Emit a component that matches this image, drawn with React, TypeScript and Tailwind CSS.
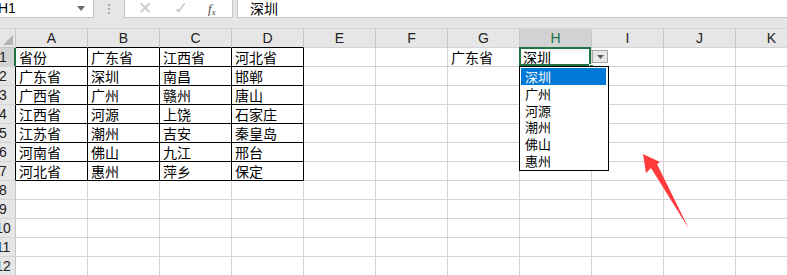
import React from 'react'

const cols = ['A', 'B', 'C', 'D', 'E', 'F', 'G', 'H', 'I', 'J', 'K']

const data: string[][] = [
  ['省份', '广东省', '江西省', '河北省', '', '', '广东省', '深圳'],
  ['广东省', '深圳', '南昌', '邯郸'],
  ['广西省', '广州', '赣州', '唐山'],
  ['江西省', '河源', '上饶', '石家庄'],
  ['江苏省', '潮州', '吉安', '秦皇岛'],
  ['河南省', '佛山', '九江', '邢台'],
  ['河北省', '惠州', '萍乡', '保定'],
]

const options = ['深圳', '广州', '河源', '潮州', '佛山', '惠州']

const cjk = "font-['Noto_Sans_CJK_SC','Noto_Sans',sans-serif]"

function Cell({ r, c }: { r: number; c: number }) {
  const text = data[r]?.[c] ?? ''
  const inTable = r < 7 && c < 4
  const selected = r === 0 && c === 7

  return (
    <div
      className={`relative h-[19px] border-r border-b pl-[3px] text-[14px] leading-[19px] text-black whitespace-nowrap ${cjk} ${
        inTable ? 'border-r-black border-b-black' : 'border-r-[#d4d4d4] border-b-[#d4d4d4]'
      }`}
    >
      {text}
      {selected && (
        <>
          <div className="absolute -left-px -top-px right-0 bottom-0 border-2 border-[#217346]" />
          <div className="absolute -right-[3px] -bottom-[3px] w-[5px] h-[5px] bg-[#217346] border border-white" />
          {/* validation dropdown button */}
          <div className="absolute left-[72px] top-[2px] w-[16px] h-[13px] bg-[#e8e8e8] border border-[#a6a6a6] flex items-center justify-center">
            <svg width="7" height="4" viewBox="0 0 7 4">
              <path d="M0 0h7L3.5 4z" fill="#5a5a5a" />
            </svg>
          </div>
          {/* validation list */}
          <div className="absolute z-10 -left-px top-[18px] w-[90px] bg-white border border-black pt-px pb-px pl-px pr-[2px]">
            {options.map((o, i) => (
              <div
                key={o}
                className={`h-[16.8px] overflow-visible pl-[4px] text-[13px] leading-[17px] ${i === 0 ? 'bg-[#0078d7] text-white' : 'text-black'}`}
              >
                {o}
              </div>
            ))}
          </div>
        </>
      )}
    </div>
  )
}

export default function App() {
  return (
    <div className="relative w-[787px] h-[275px] overflow-hidden bg-white font-['Liberation_Sans',sans-serif]">
      {/* formula bar */}
      <div className="h-[28px] bg-[#e6e6e6] flex items-start">
        <div className="w-[94px] h-[18px] bg-white border-r border-b border-[#c6c6c6] flex items-center justify-between pr-[8px]">
          <span className="-ml-[2px] text-[14px] text-black">H1</span>
          <svg width="8" height="5" viewBox="0 0 8 5">
            <path d="M0 0h8L4 5z" fill="#6b6b6b" />
          </svg>
        </div>
        <div className="w-[30px] h-[18px] flex flex-col items-center justify-center gap-[2px]">
          <div className="w-[2px] h-[2px] bg-[#a8a8a8]" />
          <div className="w-[2px] h-[2px] bg-[#a8a8a8]" />
          <div className="w-[2px] h-[2px] bg-[#a8a8a8]" />
        </div>
        <div className="w-[109px] h-[18px] bg-white border-x border-b border-[#c6c6c6] flex items-center">
          <span className="ml-[13px] text-[17px] leading-none text-[#c8c8c8]">✕</span>
          <span className="ml-[22px] text-[17px] leading-none text-[#c8c8c8]">✓</span>
          <span className="ml-[20px] text-[13px] italic font-['Liberation_Serif',serif] text-[#4a4a4a]">
            f<sub className="text-[9px]">x</sub>
          </span>
        </div>
        <div className={`ml-[4px] flex-1 h-[18px] bg-white border-l border-b border-[#c6c6c6] pl-[12px] text-[14px] leading-[16px] text-black ${cjk}`}>
          深圳
        </div>
      </div>

      {/* sheet grid */}
      <div className="grid grid-cols-[16px_repeat(11,72px)] border-t border-[#d4d4d4]">
        {/* corner */}
        <div className="h-[19px] bg-[#e6e6e6] border-r border-b border-[#c6c6c6] flex items-end justify-end p-[2px]">
          <svg width="10" height="10" viewBox="0 0 10 10">
            <path d="M10 0v10H0z" fill="#b4b4b4" />
          </svg>
        </div>
        {cols.map((c, i) => (
          <div
            key={c}
            className={`h-[19px] border-r border-b border-r-[#c6c6c6] flex items-center justify-center text-[14px] ${
              i < 4 ? 'border-b-black' : 'border-b-[#d4d4d4]'
            } ${c === 'H' ? 'bg-[#d2d2d2] text-[#217346]' : 'bg-[#e6e6e6] text-[#222]'}`}
          >
            {c}
          </div>
        ))}

        {Array.from({ length: 12 }).map((_, r) => (
          <React.Fragment key={r}>
            <div
              className={`h-[19px] overflow-hidden border-r border-b border-b-[#d4d4d4] flex items-center text-[14px] text-[#222] ${
                r === 0 ? 'bg-[#d2d2d2] border-r-2 border-r-[#217346]' : 'bg-[#e6e6e6]'
              } ${r > 0 && r < 7 ? 'border-r-black' : ''} ${r >= 7 ? 'border-r-[#c6c6c6]' : ''}`}
            >
              <span className="shrink-0 -ml-[12px] w-[30px] text-center">{r + 1}</span>
            </div>
            {cols.map((_, c) => (
              <Cell key={c} r={r} c={c} />
            ))}
          </React.Fragment>
        ))}
      </div>

      {/* annotation arrow */}
      <svg className="absolute left-0 top-0 pointer-events-none" width="787" height="275" viewBox="0 0 787 275">
        <polygon points="643,154 646,173 651,168 689,229 657,164 660,162" fill="#ff3b3b" />
      </svg>
    </div>
  )
}
